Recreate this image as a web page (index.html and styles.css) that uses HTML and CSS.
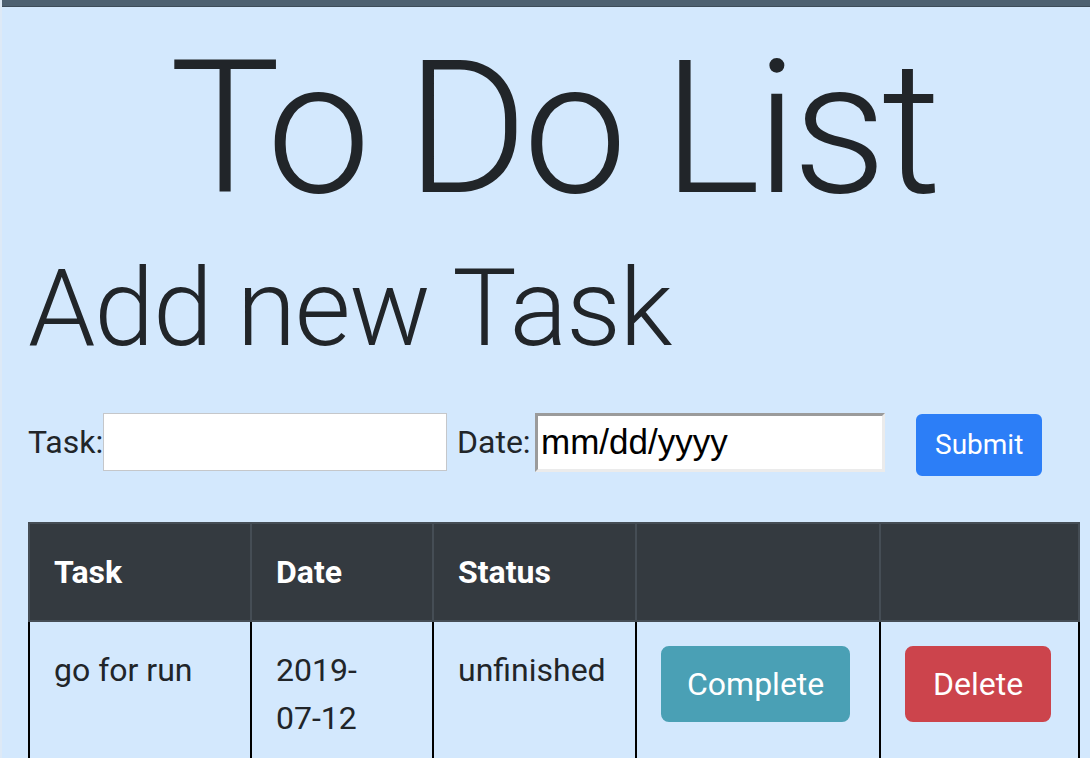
FILE: index.html
```html
<!DOCTYPE html>
<html lang="en">
<head>
<meta charset="utf-8">
<title>To Do List</title>
<link rel="stylesheet" href="styles.css">
</head>
<body>
<div class="topbar"></div>
<main class="page">
  <h1 class="title">To Do List</h1>
  <h2 class="subtitle">Add new Task</h2>
  <form class="task-form">
    <label class="lbl lbl-task" for="task">Task:</label>
    <input class="inp-task" id="task" type="text">
    <label class="lbl lbl-date" for="date">Date:</label>
    <input class="inp-date" id="date" type="text" value="mm/dd/yyyy">
    <button class="btn btn-primary btn-sm" type="button">Submit</button>
  </form>
  <table class="tasks">
    <thead>
      <tr>
        <th class="c1">Task</th>
        <th class="c2">Date</th>
        <th class="c3">Status</th>
        <th class="c4"></th>
        <th class="c5"></th>
      </tr>
    </thead>
    <tbody>
      <tr>
        <td>go for run</td>
        <td>2019-<span class="nowrap">07-12</span></td>
        <td>unfinished</td>
        <td><button class="btn btn-info" type="button">Complete</button></td>
        <td><button class="btn btn-danger" type="button">Delete</button></td>
      </tr>
    </tbody>
  </table>
</main>
</body>
</html>
```
FILE: styles.css
```css
html, body {
  margin: 0;
  padding: 0;
}
body {
  background: #d3e8fd;
  color: #212529;
  font-family: Roboto, "Liberation Sans", sans-serif;
  font-size: 32px;
  line-height: 48px;
  border-left: 2px solid #dde9f6;
  overflow: hidden;
}
.topbar {
  height: 6px;
  background: #4e6171;
  border-bottom: 1px solid #3d4c59;
}
.page {
  padding: 0 12px 0 26px;
}
.title {
  margin: 10px 0 0;
  text-align: center;
  font-size: 186px;
  font-weight: 300;
  line-height: 1.2;
  letter-spacing: -5px;
}
.subtitle {
  margin: 6px 0 0;
  font-size: 108px;
  font-weight: 300;
  line-height: 1.15;
  letter-spacing: -1.3px;
}
.task-form {
  display: flex;
  align-items: center;
  margin-top: 43px;
  height: 58px;
}
.lbl {
  display: block;
}
.lbl-task {
  width: 75px;
}
.lbl-date {
  width: 78px;
  margin-left: 10px;
}
.inp-task {
  box-sizing: border-box;
  width: 344px;
  height: 58px;
  margin: 0;
  border: 1px solid #c5c7ca;
  box-shadow: inset 0 0 0 1px #ffffff;
  background: #fff;
  padding: 0 6px;
  font: inherit;
}
.inp-date {
  box-sizing: border-box;
  width: 350px;
  height: 59px;
  margin: 0;
  border: 3px solid;
  border-color: #9b9b9b #ebebeb #ebebeb #9b9b9b;
  background: #fff;
  padding: 0 3px;
  color: #000;
  font-family: "Liberation Sans", Arial, sans-serif;
  font-size: 35px;
}
.btn {
  display: inline-block;
  border: 2px solid transparent;
  color: #fff;
  font-family: Roboto, "Liberation Sans", sans-serif;
  font-size: 32px;
  line-height: 48px;
  padding: 12px 24px;
  border-radius: 8px;
  cursor: pointer;
}
.btn-sm {
  font-size: 28px;
  line-height: 42px;
  padding: 8px 17px;
  border-radius: 6px;
}
.btn-primary {
  background: #2c7ef7;
  border-color: #2c7ef7;
  margin-left: 31px;
  align-self: flex-start;
  margin-top: 1px;
}
.btn-info {
  background: #4aa0b5;
  border-color: #4aa0b5;
}
.btn-danger {
  background: #cc444c;
  border-color: #cc444c;
  padding: 12px 26px;
}
.tasks {
  margin: 51px 0 0 0;
  width: 1050px;
  table-layout: fixed;
  border-collapse: collapse;
}
.tasks th {
  background: #343a40;
  color: #fff;
  font-weight: 700;
  text-align: left;
  vertical-align: bottom;
  padding: 24px;
  border: 2px solid #454d55;
}
.tasks td {
  vertical-align: top;
  padding: 24px;
  border: 2px solid #000;
}
.nowrap {
  white-space: nowrap;
}
.c1 { width: 172px; }
.c2 { width: 132px; }
.c3 { width: 153px; }
.c4 { width: 194px; }
.c5 { width: 149px; }
```
